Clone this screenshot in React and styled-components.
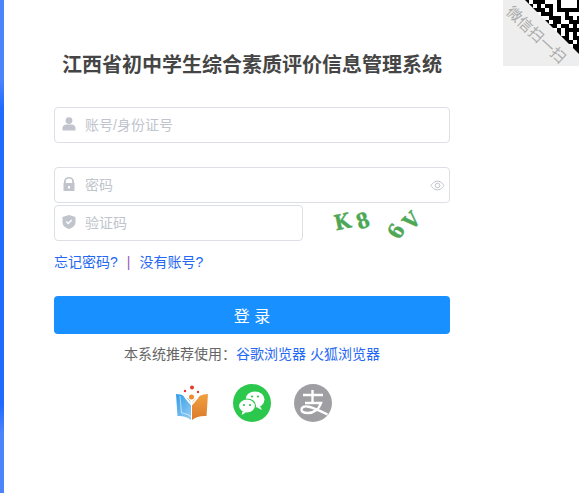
import React from 'react'
import styled, { createGlobalStyle } from 'styled-components'

const Global = createGlobalStyle`
  html, body { margin: 0; padding: 0; background: #fff; }
  body { font-family: "Liberation Sans", "Noto Sans CJK SC", sans-serif; }
`

// visible part of the qr code, one char per 4px module
const QR_ROWS = [
  '#.###...#....#',
  '##.#.##.#....#',
  '..###.#.######',
  '.#..###...#...',
  '..##..###.##.#',
  '...###.##..###',
  '....#.##.##.#.',
  '.....##.#.####',
  '......###.#.#.',
  '.......####.##',
  '........#.##.#',
  '.........##.##',
  '..........####',
  '...........#.#',
]

const Page = styled.div`
  position: relative;
  box-sizing: border-box;
  width: 579px;
  height: 493px;
  overflow: hidden;
  padding: 0 0 0 54px;
  background: #fff;
`

const Strip = styled.div`
  position: absolute;
  left: 0;
  top: 0;
  bottom: 0;
  width: 4px;
  background: linear-gradient(180deg, #4d84fb 0%, #4d84fb 16%, #1f6bff 22%, #1f6bff 82%, #4d84fb 88%);
`

const Corner = styled.div`
  position: absolute;
  top: 0;
  right: 0;
  width: 76px;
  height: 66px;
  background: #eeeeee;
  overflow: hidden;
`

const Qr = styled.svg`
  position: absolute;
  inset: 0;
  clip-path: polygon(22px 0, 76px 0, 76px 54px);
`

const CornerText = styled.span`
  position: absolute;
  left: -12px;
  top: 26px;
  width: 90px;
  text-align: center;
  font-size: 15px;
  line-height: 18px;
  color: #aaaaaa;
  transform: rotate(43deg);
`

const Form = styled.form`
  display: flex;
  flex-direction: column;
  width: 396px;
  padding-top: 52px;
`

const Title = styled.h1`
  margin: 0 0 29px;
  text-align: center;
  font-size: 20px;
  line-height: 26px;
  font-weight: 700;
  color: #454545;
  white-space: nowrap;
`

const Field = styled.div`
  box-sizing: border-box;
  display: flex;
  align-items: center;
  width: ${p => p.$width || '396px'};
  height: 36px;
  margin-bottom: ${p => p.$gap || 0}px;
  padding: 0 4px 0 7px;
  border: 1px solid #dcdfe6;
  border-radius: 4px;
  background: #fff;
`

const FieldIcon = styled.svg`
  flex: none;
  width: 14px;
  height: 14px;
  margin: -2px 9px 0 0;
  fill: #c0c4cc;
`

const Placeholder = styled.span`
  flex: 1;
  font-size: 14px;
  line-height: 34px;
  height: 34px;
  color: #c0c4cc;
`

const CaptchaRow = styled.div`
  display: flex;
  align-items: flex-start;
`

const Captcha = styled.div`
  display: flex;
  width: 100px;
  height: 36px;
  margin-left: 30px;
  font-family: "DejaVu Serif", "Liberation Serif", serif;
  font-weight: 700;
  font-size: 21px;
  color: #4da755;
  -webkit-text-stroke: 0.4px #4da755;
`

const CaptchaChar = styled.span`
  display: inline-block;
  flex: none;
  width: ${p => p.$w}px;
  margin-left: ${p => p.$left || 0}px;
  line-height: 30px;
  text-align: center;
  transform: translateY(${p => p.$y}px) rotate(${p => p.$r}deg) scaleX(0.88);
`

const Links = styled.div`
  display: flex;
  align-items: center;
  gap: 9px;
  margin-top: 12px;
  font-size: 14px;
  line-height: 18px;
  color: #2468f2;
`

const Divider = styled.span`
  color: #9b59b6;
`

const LoginButton = styled.button`
  height: 38px;
  margin-top: 25px;
  border: 0;
  border-radius: 4px;
  background: #1890ff;
  color: #fff;
  font-family: inherit;
  font-size: 16px;
`

const Recommend = styled.p`
  margin: 11px 0 0;
  text-align: center;
  font-size: 14px;
  line-height: 18px;
  color: #666;
`

const BrowserLink = styled.a`
  color: #2468f2;
`

const Logins = styled.div`
  display: flex;
  align-items: center;
  justify-content: center;
  gap: 23px;
  margin-top: 21px;
`

const Round = styled.svg`
  display: block;
  width: 38px;
  height: 38px;
`

const App = () => {
  return (
    <Page>
      <Global />
      <Strip />
      <Corner>
        <Qr width="76" height="66" viewBox="0 0 76 66">
          <rect width="76" height="66" fill="#fff" />
          {QR_ROWS.map((row, r) =>
            row.split('').map((c, i) =>
              c === '#' ? <rect key={r + '-' + i} x={22 + i * 4} y={r * 4} width="4" height="4" fill="#000" /> : null
            )
          )}
        </Qr>
        <CornerText>微信扫一扫</CornerText>
      </Corner>
      <Form>
        <Title>江西省初中学生综合素质评价信息管理系统</Title>
        <Field $gap={24}>
          <FieldIcon viewBox="0 0 14 14">
            <circle cx="7" cy="3.6" r="3.4" />
            <path d="M0.5 13.5v-2.600c0-2 2-3.400 3.600-3.400h5.800c1.600 0 3.600 1.400 3.600 3.400v2.600z" />
          </FieldIcon>
          <Placeholder>账号/身份证号</Placeholder>
        </Field>
        <Field $gap={2}>
          <FieldIcon viewBox="0 0 14 14">
            <path fillRule="evenodd" d="M2 6V4.500a5 4.500 0 0 1 10 0V6h.5v8h-11V6zM3.800 6h6.400V4.500a3.200 3 0 0 0-6.400 0zM6 9v2.500h2V9z" />
          </FieldIcon>
          <Placeholder>密码</Placeholder>
          <svg width="15" height="15" viewBox="0 0 24 24" fill="none" stroke="#c0c4cc" strokeWidth="1.6">
            <path d="M1.500 12S5.500 5 12 5s10.500 7 10.500 7-4 7-10.500 7S1.500 12 1.500 12z" />
            <circle cx="12" cy="12" r="3.600" />
          </svg>
        </Field>
        <CaptchaRow>
          <Field $width="249px">
            <FieldIcon viewBox="0 0 14 14">
              <path fillRule="evenodd" d="M7 0l6.500 2v5.200c0 3.400-3 5.800-6.500 6.800C3.500 13 .5 10.600.5 7.200V2zM3.800 7l2.300 2.400 4.200-4-1-1-3.200 3-1.300-1.400z" />
            </FieldIcon>
            <Placeholder>验证码</Placeholder>
          </Field>
          <Captcha>
            <CaptchaChar $w={20} $y={2} $r={-12}>K</CaptchaChar>
            <CaptchaChar $w={22} $y={1} $r={-18}>8</CaptchaChar>
            <CaptchaChar $w={16} $left={16} $y={10} $r={-60}>6</CaptchaChar>
            <CaptchaChar $w={10} $left={0} $y={2} $r={-45}>V</CaptchaChar>
          </Captcha>
        </CaptchaRow>
        <Links>
          <span>忘记密码?</span>
          <Divider>|</Divider>
          <span>没有账号?</span>
        </Links>
        <LoginButton type="button">登 录</LoginButton>
        <Recommend>
          本系统推荐使用：<BrowserLink>谷歌浏览器</BrowserLink> <BrowserLink>火狐浏览器</BrowserLink>
        </Recommend>
        <Logins>
          <Round viewBox="0 0 38 38">
            <defs>
              <linearGradient id="pageLeft" x1="0" y1="0" x2="0.7" y2="1">
                <stop offset="0" stopColor="#2f9be8" />
                <stop offset="1" stopColor="#8cc8f2" />
              </linearGradient>
              <linearGradient id="pageRight" x1="0" y1="0" x2="0" y2="1">
                <stop offset="0" stopColor="#f0a040" />
                <stop offset="1" stopColor="#dc7a2c" />
              </linearGradient>
            </defs>
            <path d="M4 10c6 0 12 3 15 8.500V36c-4-3-9-4.500-13.500-4z" fill="url(#pageLeft)" />
            <path d="M36 10c-6 0-12 3-16 8.500V36c4-3 9-4.500 14.500-4z" fill="url(#pageRight)" />
            <path d="M11 9c2 5 5 8 8.500 11.500C23 17 26 14 28 9" fill="none" stroke="#fff" strokeWidth="1.800" />
            <path d="M8 12l1.500 17c3 .2 7 1.400 10 4" fill="none" stroke="#fff" strokeWidth="0.800" opacity="0.700" />
            <circle cx="19.500" cy="13" r="2.500" fill="#f08a2c" />
            <circle cx="20" cy="3.500" r="2" fill="#e23b2e" />
            <circle cx="13" cy="7" r="1.200" fill="#e23b2e" />
            <circle cx="26" cy="8" r="1.200" fill="#e23b2e" />
          </Round>
          <Round viewBox="0 0 38 38">
            <circle cx="19" cy="19" r="19" fill="#2cc84d" />
            <ellipse cx="22" cy="15.500" rx="9.500" ry="8" fill="#fff" />
            <path d="M27 22l2 4-5-2.500z" fill="#fff" />
            <ellipse cx="14" cy="22" rx="8.500" ry="7" fill="#fff" stroke="#2cc84d" strokeWidth="1.200" />
            <path d="M9.500 27.500l-1 3.500 4.500-2.500z" fill="#fff" />
            <circle cx="11" cy="21" r="1.100" fill="#2cc84d" />
            <circle cx="17" cy="21" r="1.100" fill="#2cc84d" />
            <circle cx="19" cy="12.500" r="1.100" fill="#2cc84d" />
            <circle cx="25" cy="12.500" r="1.100" fill="#2cc84d" />
          </Round>
          <Round viewBox="0 0 38 38">
            <circle cx="19" cy="19" r="19" fill="#9e9ea3" />
            <path d="M9 11h20M18.500 6v13M11 19h16c-2 6-7 10-13 10-4 0-6.500-1-6.500-3.500 0-2.500 3-3.500 6-3 5 .7 12 4 20 8" fill="none" stroke="#fff" strokeWidth="2.400" />
          </Round>
        </Logins>
      </Form>
    </Page>
  )
}

export default App
